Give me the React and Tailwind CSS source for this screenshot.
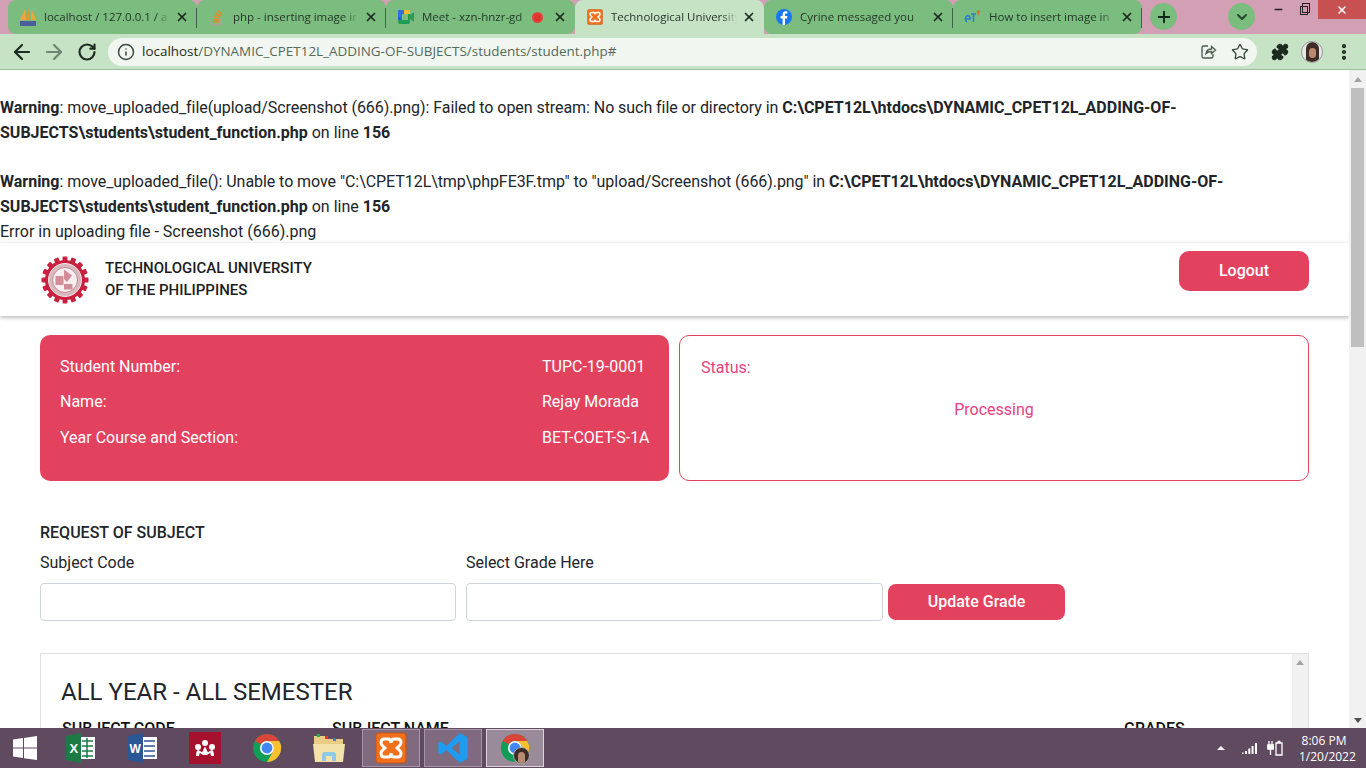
import React from "react";
import { ArrowLeft, ArrowRight, RotateCw, Info, Star, Puzzle, EllipsisVertical, X, Plus, ChevronDown, Minus } from "lucide-react";

const XamppIcon = ({ size }) => (
  <svg width={size} height={size} viewBox="0 0 32 32">
    <rect x="1" y="1" width="30" height="30" rx="3" fill="#f0701c" stroke="#c9560f" strokeWidth="1" />
    <path
      d="M9 7h4c2 0 3 2 3 4 0-2 1-4 3-4h4c2 0 3 2 3 4s-2 3-4 5c2 2 4 3 4 5s-1 4-3 4h-4c-2 0-3-2-3-4 0 2-1 4-3 4H9c-2 0-3-2-3-4s2-3 4-5c-2-2-4-3-4-5s1-4 3-4z"
      fill="none"
      stroke="#fff"
      strokeWidth="3"
    />
  </svg>
);

const ChromeIcon = ({ size = 34 }) => (
  <svg width={size} height={size} viewBox="0 0 32 32">
    <circle cx="16" cy="16" r="15" fill="#0f9d58" />
    <path d="M16 1a15 15 0 0 1 13 7.500H16a7.500 7.500 0 0 0-6.500 3.750L3 8.500A15 15 0 0 1 16 1z" fill="#db4437" />
    <path d="M29 8.500A15 15 0 0 1 16 31l6.500-11.250A7.500 7.500 0 0 0 16 8.500z" fill="#fbc02d" />
    <circle cx="16" cy="16" r="7.500" fill="#fff" />
    <circle cx="16" cy="16" r="5.800" fill="#4285f4" />
  </svg>
);

const TabIcon = ({ kind }) => {
  if (kind === "pma")
    return (
      <svg width="18" height="20" viewBox="0 0 18 20">
        <path d="M1 13 L6 2 L7 13Z" fill="#f3a53a" />
        <path d="M7 13 L9 1 L11 13Z" fill="#ee8f2a" />
        <path d="M12 13 L12.500 2 L17 13Z" fill="#f3a53a" />
        <rect x="1" y="14" width="16" height="5" fill="#4a5f9c" />
      </svg>
    );
  if (kind === "so")
    return (
      <svg width="16" height="18" viewBox="0 0 16 18">
        <path d="M2 11v6h10v-6" fill="none" stroke="#a8a29a" strokeWidth="1.500" />
        <path d="M4 14h6M4 11.500l6 .6M5 8.500l5.600 1.600M6.500 5.500l5 2.800M9 2.500l4 4.500" stroke="#e8872b" strokeWidth="1.600" />
      </svg>
    );
  if (kind === "meet")
    return (
      <svg width="16" height="16" viewBox="0 0 16 16">
        <rect x="0" y="1" width="12" height="14" rx="2" fill="#1f9d55" />
        <rect x="0" y="1" width="6" height="7" fill="#2f6fe0" />
        <rect x="6" y="1" width="6" height="4" fill="#f5bd1f" />
        <rect x="0" y="8" width="3" height="3" fill="#1e63d0" />
        <path d="M12 6l4-3v10l-4-3z" fill="#2a9d4f" />
        <rect x="4" y="5" width="6" height="6" fill="#7abd7f" />
      </svg>
    );
  if (kind === "xampp") return <XamppIcon size={16} />;
  if (kind === "fb")
    return (
      <svg width="16" height="16" viewBox="0 0 16 16">
        <circle cx="8" cy="8" r="8" fill="#1877f2" />
        <path d="M9 16V9.500h2l.4-2.400H9V5.700c0-.8.3-1.200 1.200-1.200h1.200V2.400C11 2.300 10.300 2.200 9.700 2.200 7.800 2.200 6.600 3.300 6.600 5.300v1.800H4.600v2.400h2V16z" fill="#fff" />
      </svg>
    );
  return (
    <svg width="18" height="16" viewBox="0 0 18 16">
      <path d="M3 13c-2-1-2-5 0-6 2-1 3 1 3 3H2M7 5h5M9.500 5v8" fill="none" stroke="#2f7fc9" strokeWidth="1.700" />
      <path d="M13 1l3 1-2 5z" fill="#d9661f" />
    </svg>
  );
};

const tabs = [
  { kind: "pma", title: "localhost / 127.0.0.1 / a", corner: "rounded-bl-lg", divider: true },
  { kind: "so", title: "php - inserting image ir", divider: true },
  { kind: "meet", title: "Meet - xzn-hnzr-gd", corner: "rounded-br-lg", rec: true },
  { kind: "xampp", title: "Technological University", active: true },
  { kind: "fb", title: "Cyrine messaged you", corner: "rounded-bl-lg", divider: true },
  { kind: "so2", title: "How to insert image in", corner: "rounded-br-lg", divider: true },
];

const Tab = ({ tab }) => (
  <div
    className={`relative flex h-[34px] w-[189px] shrink-0 items-center rounded-t-lg pl-[10px] ${tab.corner || ""} ${
      tab.active ? "bg-[#c7e3c5]" : "bg-[#7abd7f]"
    }`}
  >
    <span className="flex w-[20px] shrink-0 justify-center">
      <TabIcon kind={tab.kind} />
    </span>
    <span
      className={`ml-[6px] overflow-hidden whitespace-nowrap text-[11.500px] text-[#26352a] [mask-image:linear-gradient(to_right,black_88%,transparent)] ${
        tab.rec ? "w-[110px]" : "w-[126px]"
      }`}
    >
      {tab.title}
    </span>
    {tab.rec && <span className="h-[11px] w-[11px] shrink-0 rounded-full border-2 border-[#e8413a] bg-[#d9352e]" />}
    <X size={14} strokeWidth={3} className="absolute left-[167px] top-[10px] text-[#1d2a20]" />
    {tab.divider && <span className="absolute right-0 top-[8px] h-[20px] w-px bg-[#40604a]" />}
  </div>
);

const BrowserChrome = () => (
  <div className="shrink-0 font-['Open_Sans',sans-serif]">
    <div className="flex h-[34px] items-start bg-[#d29fb5] pl-[8px]">
      {tabs.map((tab) => (
        <Tab key={tab.title} tab={tab} />
      ))}
      <div className="ml-[8px] mt-[3px] flex h-[27px] w-[27px] shrink-0 items-center justify-center rounded-full bg-[#7abd7f]">
        <Plus size={18} strokeWidth={2.500} className="text-[#14251a]" />
      </div>
      <div className="ml-[51px] mt-[3px] flex h-[27px] w-[27px] shrink-0 items-center justify-center rounded-full bg-[#7abd7f]">
        <ChevronDown size={16} strokeWidth={3} className="text-[#26452e]" />
      </div>
      <div className="flex h-[19px] flex-1 items-center">
        <Minus size={11} strokeWidth={3.500} className="ml-[18px] shrink-0 text-[#222]" />
        <span className="relative ml-[16px] mt-[2px] h-[9px] w-[8px] shrink-0 border border-[#222]">
          <span className="absolute left-[1px] top-[-4px] h-[10px] w-[8px] border border-[#222]" />
        </span>
        <div className="ml-auto flex h-[19px] w-[48px] shrink-0 items-center justify-center bg-[#c75050]">
          <X size={12} strokeWidth={3} className="text-white" />
        </div>
      </div>
    </div>
    <div className="flex h-[36px] items-center border-b border-[#9fbd9f] bg-[#c7e3c5] pl-[10px]">
      <ArrowLeft size={24} strokeWidth={2.200} className="shrink-0 text-[#1e2a22]" />
      <ArrowRight size={24} strokeWidth={2.200} className="ml-[8px] shrink-0 text-[#6f8573]" />
      <RotateCw size={20} strokeWidth={2.600} className="ml-[11px] shrink-0 text-[#1e2a22]" />
      <div className="ml-[11px] flex h-[28px] w-[1149px] shrink-0 items-center rounded-full bg-[#f1f7f0] pl-[9px] pr-[8px]">
        <Info size={18} strokeWidth={2} className="shrink-0 text-[#3a463c]" />
        <span className="ml-[7px] flex-1 whitespace-nowrap text-[13.440px] text-[#55695a]">
          <span className="text-[#1d2a20]">localhost</span>/DYNAMIC_CPET12L_ADDING-OF-SUBJECTS/students/student.php#
        </span>
        <svg width="17" height="17" viewBox="0 0 17 17" fill="none" stroke="#4a5a4d" strokeWidth="1.300" className="shrink-0">
          <path d="M8 3H3.500A1.500 1.500 0 0 0 2 4.500v9A1.500 1.500 0 0 0 3.500 15h8a1.500 1.500 0 0 0 1.500-1.500V11" />
          <path d="M6 10.500c.5-3 2.500-4.500 5.500-4.500V3.500L15.500 7l-4 3.500V8.500c-2.500 0-4 .5-5.500 2z" />
        </svg>
        <Star size={18} strokeWidth={1.800} className="ml-[14px] shrink-0 text-[#3a463c]" />
      </div>
      <Puzzle size={18} fill="#1d2a20" className="ml-[14px] shrink-0 text-[#1d2a20]" />
      <div className="ml-[12px] flex h-[22px] w-[22px] shrink-0 items-end justify-center overflow-hidden rounded-full border border-[#9a9a9a] bg-[#e8e8e8]">
        <span className="flex h-[20px] w-[13px] items-center justify-center rounded-t-full bg-[#3d2c26]">
          <span className="mt-[2px] h-[10px] w-[7px] rounded-full bg-[#b98a70]" />
        </span>
      </div>
      <EllipsisVertical size={20} strokeWidth={3} className="ml-[11px] shrink-0 text-[#1d2a20]" />
    </div>
  </div>
);

const gearTeeth = [0, 22.5, 45, 67.5, 90, 112.5, 135, 157.5, 180, 202.5, 225, 247.5, 270, 292.5, 315, 337.5];

const Seal = () => (
  <svg width="50" height="50" viewBox="0 0 50 50">
    {gearTeeth.map((angle) => (
      <rect key={angle} x="22.500" y="1.500" width="5" height="6" rx="1" fill="#c8203f" transform={`rotate(${angle} 25 25)`} />
    ))}
    <circle cx="25" cy="25" r="20" fill="#c8203f" />
    <circle cx="25" cy="25" r="16.500" fill="#d9b9be" stroke="#f3e4e6" strokeWidth="1" />
    <circle cx="25" cy="25" r="12.500" fill="#f7eeef" stroke="#b98d94" strokeWidth="1" />
    <path d="M15.500 21h8v9h-8zM24 14.500l8 6-5 6.500-3-3zM24 29h8.500v5.500H24z" fill="#d28d99" />
  </svg>
);

const WarningLine = ({ fn, message, file, className }) => (
  <p className={className}>
    <b className="font-bold">Warning</b>
    <span className="tracking-[-0.06px]">
      : {fn}: {message} in{" "}
    </span>
    <b className="font-bold">{file}</b> on line <b className="font-bold">156</b>
  </p>
);

const studentRows = [
  ["Student Number:", "TUPC-19-0001"],
  ["Name:", "Rejay Morada"],
  ["Year Course and Section:", "BET-COET-S-1A"],
];

const PageContent = () => (
  <div className="relative min-w-0 flex-1 overflow-hidden bg-white font-['Roboto',sans-serif] text-[16px] text-[#212529]">
    <div className="pt-[25px] leading-[25px]">
      <WarningLine
        className="mb-[24px]"
        fn="move_uploaded_file(upload/Screenshot (666).png)"
        message="Failed to open stream: No such file or directory"
        file="C:\CPET12L\htdocs\DYNAMIC_CPET12L_ADDING-OF-SUBJECTS\students\student_function.php"
      />
      <WarningLine
        fn="move_uploaded_file()"
        message={'Unable to move "C:\\CPET12L\\tmp\\phpFE3F.tmp" to "upload/Screenshot (666).png"'}
        file="C:\CPET12L\htdocs\DYNAMIC_CPET12L_ADDING-OF-SUBJECTS\students\student_function.php"
      />
      <p className="-mb-[2px]">Error in uploading file - Screenshot (666).png</p>
    </div>

    {/* Navbar */}
    <div className="flex h-[74px] items-center justify-between border-t border-[#f2f2f2] pl-[40px] pr-[40px] shadow-[0_2px_4px_rgba(0,0,0,0.25)]">
      <div className="flex items-center">
        <Seal />
        <div className="mb-[2px] ml-[15px] text-[15px] font-medium uppercase leading-[22px] text-[#1c1c1c]">
          Technological University
          <br />
          of the Philippines
        </div>
      </div>
      <button className="mb-[17px] h-[40px] w-[130px] rounded-[10px] bg-[#e3425e] font-medium text-white">Logout</button>
    </div>

    {/* Student info and status */}
    <div className="mt-[19px] flex gap-[10px] pl-[40px] pr-[40px]">
      <div className="h-[146px] w-[629px] rounded-[10px] bg-[#e3425e] pl-[20px] pr-[19px] pt-[14px] text-white">
        {studentRows.map(([label, value]) => (
          <div key={label} className="flex h-[35.500px] items-center justify-between">
            <span>{label}</span>
            <span className="w-[108px] whitespace-nowrap">{value}</span>
          </div>
        ))}
      </div>
      <div className="h-[146px] flex-1 rounded-[10px] border border-[#e3425e] px-[21px] pt-[20px] text-[#e8417f]">
        <p>Status:</p>
        <p className="mt-[18px] text-center">Processing</p>
      </div>
    </div>

    {/* Request form */}
    <div className="mt-[42px] pl-[40px] pr-[40px]">
      <h2 className="font-medium uppercase leading-[19px]">Request of Subject</h2>
      <div className="mt-[11px] flex items-end">
        <label className="block w-[416px]">
          <span className="block leading-[19px]">Subject Code</span>
          <input className="mt-[11px] block h-[38px] w-full rounded-[4px] border border-[#ced4da] bg-white" />
        </label>
        <label className="ml-[10px] block w-[417px]">
          <span className="block leading-[19px]">Select Grade Here</span>
          <input className="mt-[11px] block h-[38px] w-full rounded-[4px] border border-[#ced4da] bg-white" />
        </label>
        <button className="mb-[1px] ml-[5px] h-[36px] w-[177px] rounded-[8px] bg-[#e3425e] font-medium text-white">Update Grade</button>
      </div>
    </div>

    {/* Subjects table */}
    <div className="ml-[40px] mr-[40px] mt-[32px] flex h-[120px] border border-[#e0e0e0]">
      <div className="min-w-0 flex-1 pl-[20px] pt-[22px]">
        <h3 className="text-[24px] uppercase leading-[32px]">All Year - All Semester</h3>
        <div className="mt-[11px] flex text-[16px] font-medium uppercase leading-[19px] text-[#111]">
          <span className="ml-[1px] w-[270px]">Subject Code</span>
          <span className="w-[792px]">Subject Name</span>
          <span>Grades</span>
        </div>
      </div>
      <div className="flex w-[16px] shrink-0 justify-center bg-[#f1f1f1] pt-[6px]">
        <span className="h-0 w-0 border-x-[4px] border-b-[5px] border-x-transparent border-b-[#a3a3a3]" />
      </div>
    </div>
  </div>
);

const PageScrollbar = () => (
  <div className="flex w-[17px] shrink-0 flex-col items-center bg-[#f1f1f1] pt-[7px]">
    <span className="h-0 w-0 border-x-[4px] border-b-[5px] border-x-transparent border-b-[#a3a3a3]" />
    <div className="mt-[6px] h-[259px] w-[13px] bg-[#bfbfbf]" />
    <span className="mt-auto mb-[5px] h-0 w-0 border-x-[4px] border-t-[5px] border-x-transparent border-t-[#505050]" />
  </div>
);

const Slot = ({ children }) => <div className="flex w-[62px] shrink-0 justify-center">{children}</div>;

const Taskbar = () => (
  <div className="flex h-[40px] shrink-0 items-center bg-[#604a60] font-['Open_Sans',sans-serif] text-white">
    <div className="flex w-[50px] shrink-0 justify-center">
      <svg width="26" height="26" viewBox="0 0 26 26" fill="#fff">
        <path d="M1 4.500l10-1.400v9.400H1zM12 3l13-2v11.500H12zM1 13.500h10v9.400L1 21.500zM12 13.500h13V25l-13-1.800z" />
      </svg>
    </div>
    <Slot>
      <svg width="30" height="30" viewBox="0 0 30 30">
        <rect x="11" y="4" width="18" height="22" fill="#fff" />
        <path d="M16 8h11M16 13h11M16 18h11M16 23h11M21 5v20" stroke="#1d7a45" strokeWidth="1.500" />
        <path d="M0 3l15-3v30L0 27z" fill="#1d7a45" />
        <text x="3.500" y="20" fontSize="13" fontWeight="700" fill="#fff" fontFamily="Liberation Sans, sans-serif">X</text>
      </svg>
    </Slot>
    <Slot>
      <svg width="30" height="30" viewBox="0 0 30 30">
        <rect x="11" y="4" width="18" height="22" fill="#fff" />
        <path d="M16 8h11M16 13h11M16 18h11M16 23h11" stroke="#2b5797" strokeWidth="1.500" />
        <path d="M0 3l15-3v30L0 27z" fill="#2b5797" />
        <text x="1.500" y="20" fontSize="12" fontWeight="700" fill="#fff" fontFamily="Liberation Sans, sans-serif">W</text>
      </svg>
    </Slot>
    <Slot>
      <svg width="32" height="32" viewBox="0 0 32 32">
        <rect width="32" height="32" fill="#a6122d" />
        <circle cx="16" cy="11" r="3" fill="#fff" />
        <circle cx="9" cy="15" r="3" fill="#fff" />
        <circle cx="23" cy="15" r="3" fill="#fff" />
        <path d="M7 24c0-4 1-6 2-6s3 2 4 2 2-5 3-5 2 5 3 5 3-2 4-2 2 2 2 6h-3c0-2-1-3-1-3l-3 2h-4l-3-2s-1 1-1 3z" fill="#fff" />
      </svg>
    </Slot>
    <Slot>
      <ChromeIcon size={30} />
    </Slot>
    <Slot>
      <svg width="32" height="32" viewBox="0 0 32 32">
        <path d="M1 4h12l2 3h15v6H1z" fill="#e9cd84" />
        <rect x="4" y="2" width="3" height="3" fill="#27b04a" />
        <rect x="12" y="4" width="3" height="3" fill="#d2412c" />
        <rect x="20" y="6" width="3" height="3" fill="#2d7fd5" />
        <path d="M0 12h32l-2 18H2z" fill="#f4e2ab" />
        <path d="M9 29v-6a3 3 0 0 1 3-3h8a3 3 0 0 1 3 3v6h-4v-5h-6v5z" fill="#8fc8e8" />
      </svg>
    </Slot>
    <div className="ml-[2px] flex h-[38px] w-[58px] shrink-0 items-center justify-center border border-[#a596a5] bg-[#7f6a7f]">
      <XamppIcon size={32} />
    </div>
    <div className="ml-[4px] flex h-[38px] w-[58px] shrink-0 items-center justify-center border border-[#a596a5] bg-[#7f6a7f]">
      <svg width="32" height="32" viewBox="0 0 24 24">
        <path d="M17 1l6 3v16l-6 3-10-9.500L3 17l-2-1.500V8.500L3 7l4 3.500zM17 7l-6 5 6 5z" fill="#1f9cf0" fillRule="evenodd" />
      </svg>
    </div>
    <div className="relative ml-[4px] flex h-[38px] w-[58px] shrink-0 items-center justify-center border border-[#dcd6dc] bg-[#9a8a9a]">
      <ChromeIcon size={30} />
      <span className="absolute bottom-[2px] right-[13px] flex h-[17px] w-[17px] items-end justify-center overflow-hidden rounded-full border border-[#aaa] bg-[#3d2c26]">
        <span className="h-[11px] w-[7px] rounded-t-full bg-[#b98a70]" />
      </span>
    </div>

    <div className="ml-auto flex items-center pr-[17px]">
      <span className="h-0 w-0 border-x-[4px] border-b-[4px] border-x-transparent border-b-white" />
      <svg width="15" height="11" viewBox="0 0 15 11" className="ml-[17px]" fill="#fff">
        <path d="M0 9.500h1.500V11H0zM3 8h2v3H3zM6.300 5.500h2V11h-2zM9.600 3h2v8h-2zM13 0h2v11h-2z" />
      </svg>
      <svg width="16" height="16" viewBox="0 0 16 16" className="ml-[10px]" fill="none" stroke="#fff" strokeWidth="1.300">
        <path d="M9 3h6v12H9zM10.500 1.500h3" />
        <path d="M2 1v4M5 1v4" />
        <path d="M.8 5h5.500v4H.8zM3.500 9v6" fill="#fff" />
      </svg>
      <div className="ml-[16px] mt-[2px] w-[50px] text-center text-[12px] leading-[16px]">
        <div>8:06 PM</div>
        <div className="whitespace-nowrap">1/20/2022</div>
      </div>
    </div>
  </div>
);

const App = () => (
  <div className="flex h-screen w-full flex-col overflow-hidden bg-white">
    <BrowserChrome />
    <div className="flex min-h-0 flex-1">
      <PageContent />
      <PageScrollbar />
    </div>
    <Taskbar />
  </div>
);

export default App;
